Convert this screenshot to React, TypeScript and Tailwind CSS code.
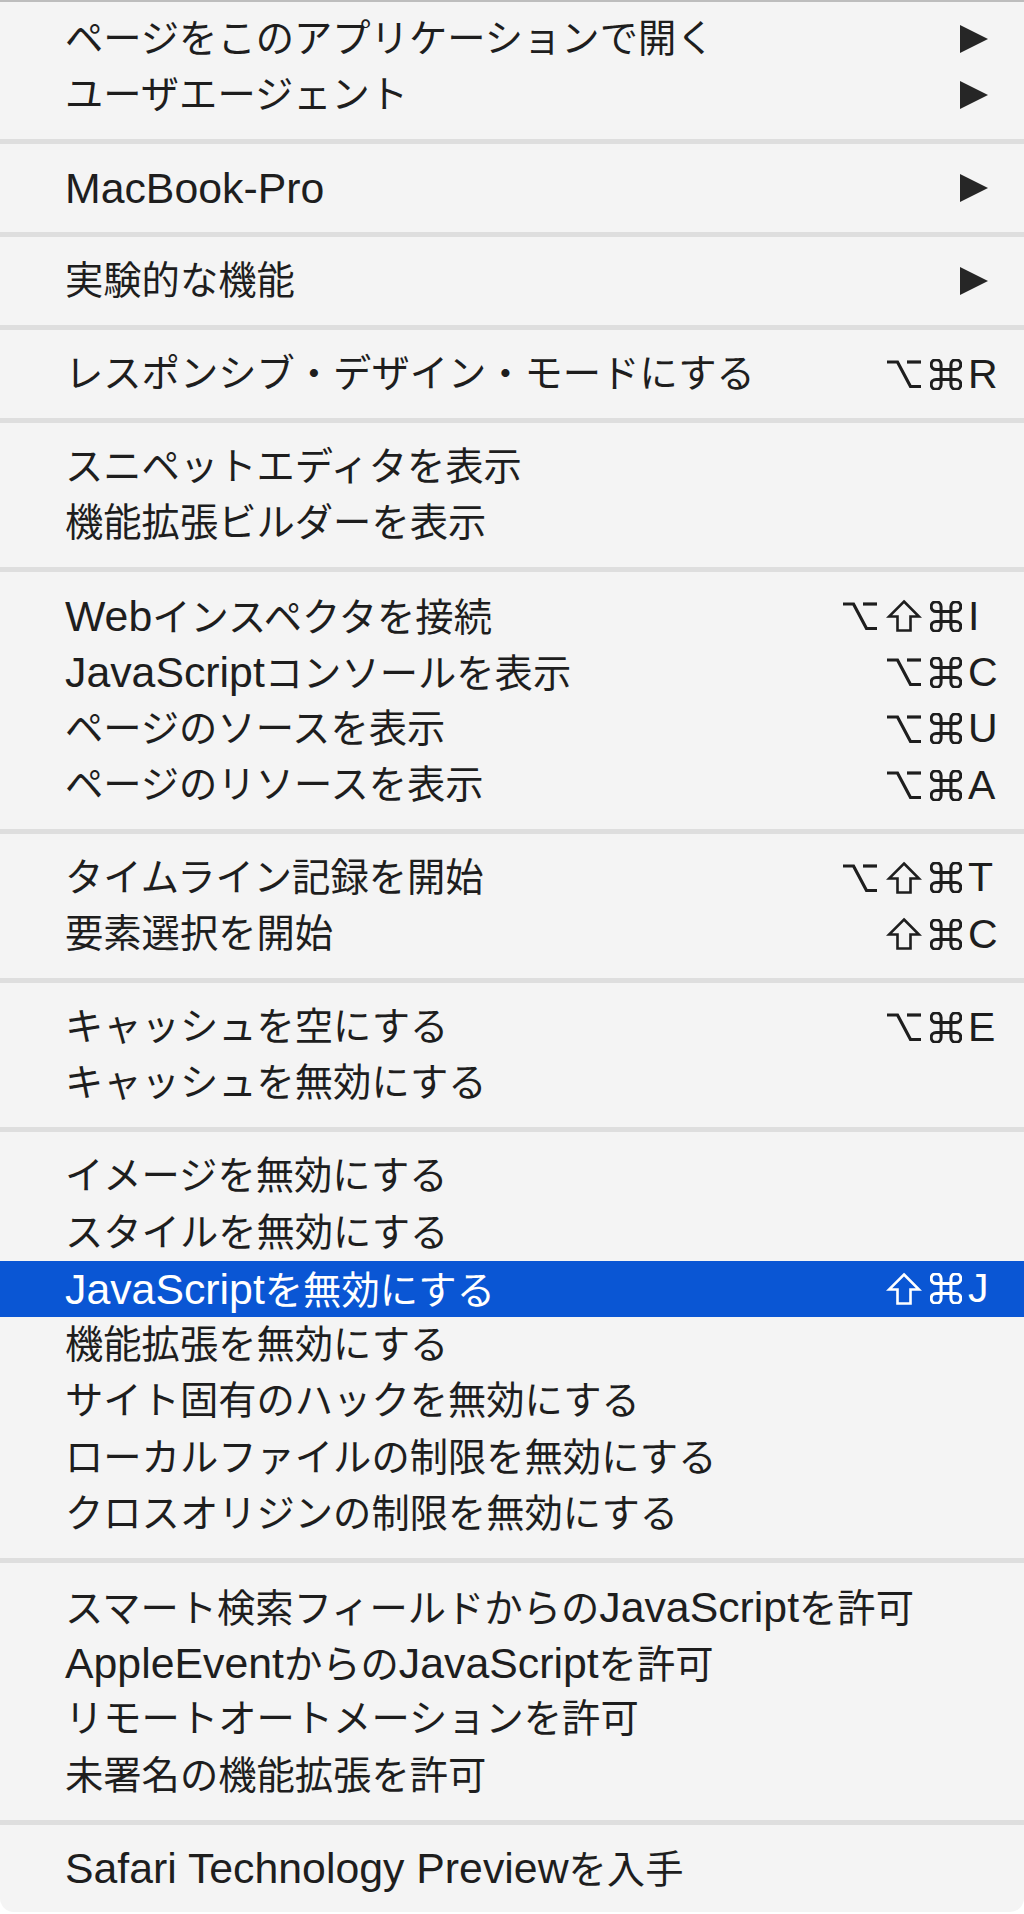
import React from "react";

type Mod = "opt" | "shift" | "cmd";

type Item = {
  label: string;
  submenu?: boolean;
  mods?: Mod[];
  keyChar?: string;
  active?: boolean;
};

const sections: Item[][] = [
  [
    { label: "ページをこのアプリケーションで開く", submenu: true },
    { label: "ユーザエージェント", submenu: true },
  ],
  [{ label: "MacBook-Pro", submenu: true }],
  [{ label: "実験的な機能", submenu: true }],
  [{ label: "レスポンシブ・デザイン・モードにする", mods: ["opt", "cmd"], keyChar: "R" }],
  [{ label: "スニペットエディタを表示" }, { label: "機能拡張ビルダーを表示" }],
  [
    { label: "Webインスペクタを接続", mods: ["opt", "shift", "cmd"], keyChar: "I" },
    { label: "JavaScriptコンソールを表示", mods: ["opt", "cmd"], keyChar: "C" },
    { label: "ページのソースを表示", mods: ["opt", "cmd"], keyChar: "U" },
    { label: "ページのリソースを表示", mods: ["opt", "cmd"], keyChar: "A" },
  ],
  [
    { label: "タイムライン記録を開始", mods: ["opt", "shift", "cmd"], keyChar: "T" },
    { label: "要素選択を開始", mods: ["shift", "cmd"], keyChar: "C" },
  ],
  [
    { label: "キャッシュを空にする", mods: ["opt", "cmd"], keyChar: "E" },
    { label: "キャッシュを無効にする" },
  ],
  [
    { label: "イメージを無効にする" },
    { label: "スタイルを無効にする" },
    { label: "JavaScriptを無効にする", mods: ["shift", "cmd"], keyChar: "J", active: true },
    { label: "機能拡張を無効にする" },
    { label: "サイト固有のハックを無効にする" },
    { label: "ローカルファイルの制限を無効にする" },
    { label: "クロスオリジンの制限を無効にする" },
  ],
  [
    { label: "スマート検索フィールドからのJavaScriptを許可" },
    { label: "AppleEventからのJavaScriptを許可" },
    { label: "リモートオートメーションを許可" },
    { label: "未署名の機能拡張を許可" },
  ],
  [{ label: "Safari Technology Previewを入手" }],
];

function ModIcon({ mod }: { mod: Mod }) {
  if (mod === "opt") {
    return (
      <svg viewBox="0 0 36 30" className="h-[30px] w-[36px]" fill="none" stroke="currentColor" strokeWidth="3.2">
        <path d="M1 3h10.5l13 24.5H35" />
        <path d="M21 3h14" />
      </svg>
    );
  }
  if (mod === "shift") {
    return (
      <svg viewBox="0 0 36 34" className="h-[34px] w-[36px]" fill="none" stroke="currentColor" strokeWidth="2.6" strokeLinejoin="miter">
        <path d="M18 2.5 33 17.5h-8.5V31.5h-13V17.5H3z" />
      </svg>
    );
  }
  return (
    <svg viewBox="2.6 2.6 18.8 18.8" className="h-[31px] w-[32px]" fill="none" stroke="currentColor" strokeWidth="1.85">
      <path d="M15 6v12a3 3 0 1 0 3-3H6a3 3 0 1 0 3 3V6a3 3 0 1 0-3 3h12a3 3 0 1 0-3-3" />
    </svg>
  );
}

// latin runs are set a touch larger so they sit like the system font next to kana
function Label({ text }: { text: string }) {
  const parts = text.split(/([A-Za-z0-9\- ]+)/).filter(Boolean);
  return (
    <span className="whitespace-nowrap">
      {parts.map((part, i) =>
        /[A-Za-z]/.test(part) ? (
          <span key={i} className="text-[42.8px]">
            {part}
          </span>
        ) : (
          <span key={i}>{part}</span>
        )
      )}
    </span>
  );
}

function MenuRow({ item }: { item: Item }) {
  return (
    <div
      className={`flex h-[56.3px] items-center justify-between pl-[65px] pr-[16px] ${
        item.active ? "bg-[#0a56d4] text-white" : "text-[#1e1e1e]"
      }`}
    >
      <Label text={item.label} />
      {item.submenu && (
        <svg viewBox="0 0 28 28" className="mr-[20px] h-[28px] w-[28px]">
          <path d="M0 0 28 14 0 28z" fill={item.active ? "#ffffff" : "#262626"} />
        </svg>
      )}
      {item.keyChar && (
        <div className="flex items-center">
          <div className="flex items-center gap-[8px]">
            {item.mods?.map((m) => <ModIcon key={m} mod={m} />)}
          </div>
          <span className="ml-[6px] w-[40px] text-[41px] leading-none">{item.keyChar}</span>
        </div>
      )}
    </div>
  );
}

export default function App() {
  return (
    <div
      className="min-h-screen w-[1024px] bg-white"
      style={{ fontFamily: '"Liberation Sans", "Noto Sans CJK JP", sans-serif' }}
    >
      <div className="rounded-b-[14px] border-t-2 border-[#bdbdbd] bg-[#f4f4f4] pb-[15px] pt-[9px] text-[38.3px] leading-none">
        {sections.map((section, si) => (
          <div key={si}>
            {si > 0 && (
              <div className="flex h-[36.6px] items-center">
                <div className="h-[5px] w-full bg-[#dedede]" />
              </div>
            )}
            {section.map((item) => (
              <MenuRow key={item.label} item={item} />
            ))}
          </div>
        ))}
      </div>
    </div>
  );
}
